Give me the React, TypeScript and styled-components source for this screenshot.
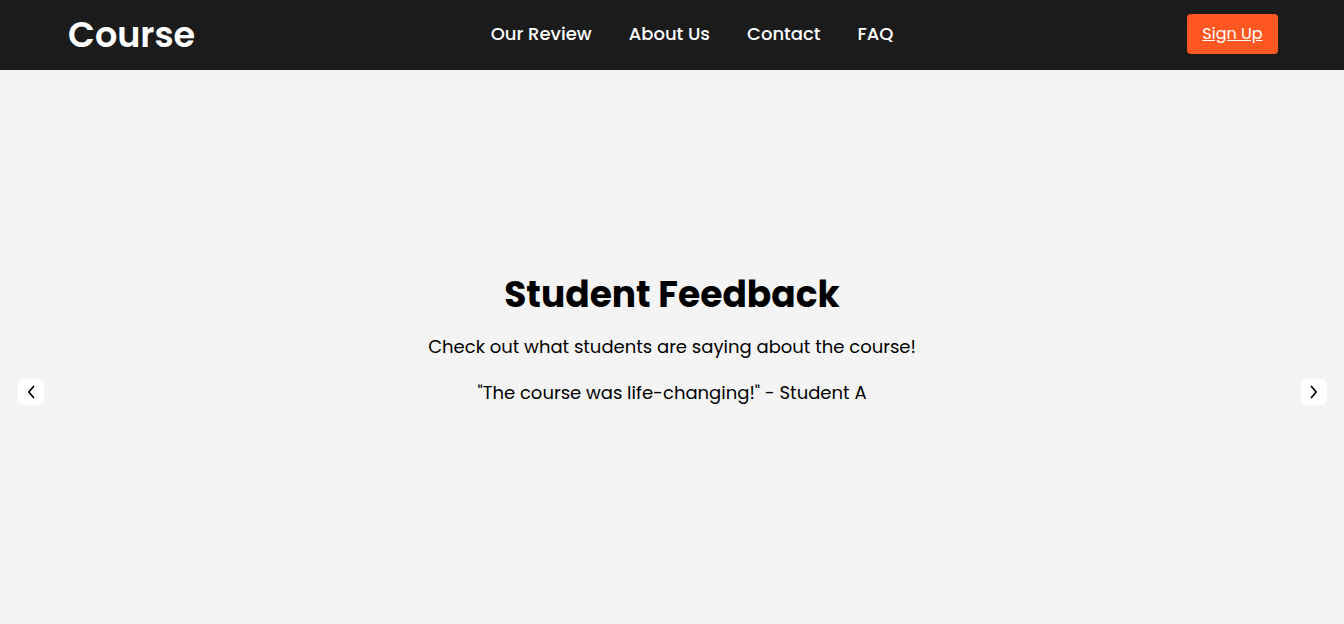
import React from "react";
import styled, { createGlobalStyle } from "styled-components";

const Global = createGlobalStyle`
  html, body { margin: 0; padding: 0; }
  body { background: #f4f4f4; font-family: "Poppins", "Noto Sans", sans-serif; color: #000; }
  #root { min-height: 624px; display: flex; flex-direction: column; }
`;

const Header = styled.header`
  height: 70px;
  background: #1b1b1b;
  display: flex;
  align-items: center;
  justify-content: space-between;
  padding: 0 66px 0 68px;
  box-sizing: border-box;
`;

const Logo = styled.div`
  font-weight: 600;
  font-size: 35px;
  line-height: 1;
  color: #fff;
  margin-bottom: 2px;
`;

const Nav = styled.nav`
  display: flex;
  gap: 37px;
  margin: 0 0 3px 2px;
`;

const NavLink = styled.a`
  color: #fff;
  text-decoration: none;
  font-size: 18px;
  font-weight: 500;
`;

const SignUp = styled.a`
  background: #ff5722;
  color: #fff;
  font-size: 16px;
  text-decoration: underline;
  width: 91px;
  height: 40px;
  border-radius: 4px;
  display: flex;
  align-items: center;
  justify-content: center;
  margin-bottom: 3px;
`;

const Main = styled.main`
  flex: 1;
  position: relative;
  display: flex;
  flex-direction: column;
  align-items: center;
  padding-top: 200px;
  box-sizing: border-box;
`;

const Title = styled.h1`
  margin: 0;
  font-size: 36px;
  font-weight: 700;
  line-height: 50px;
`;

const Subtitle = styled.p`
  margin: 13px 0 0;
  font-size: 18px;
  line-height: 28px;
`;

const Quote = styled.p`
  margin: 18px 0 0;
  font-size: 18px;
  line-height: 28px;
`;

const Arrow = styled.button<{ $side: "left" | "right" }>`
  position: absolute;
  top: 309px;
  ${(p) => (p.$side === "left" ? "left: 18px;" : "right: 17px;")}
  width: 26px;
  height: 26px;
  border: none;
  border-radius: 5px;
  background: #fff;
  color: #000;
  padding: 0;
  display: flex;
  align-items: center;
  justify-content: center;
`;

const Chevron = ({ dir }: { dir: "left" | "right" }) => (
  <svg width="8" height="14" viewBox="0 0 8 14" fill="none">
    <path
      d={dir === "left" ? "M6.5 1.5 L1.8 7 L6.5 12.5" : "M1.5 1.5 L6.2 7 L1.5 12.5"}
      stroke="#000"
      strokeWidth="1.7"
      strokeLinecap="round"
      strokeLinejoin="round"
    />
  </svg>
);

export default function App() {
  return (
    <>
      <Global />
      <Header>
        <Logo>Course</Logo>
        <Nav>
          <NavLink href="#">Our Review</NavLink>
          <NavLink href="#">About Us</NavLink>
          <NavLink href="#">Contact</NavLink>
          <NavLink href="#">FAQ</NavLink>
        </Nav>
        <SignUp href="#">Sign Up</SignUp>
      </Header>
      <Main>
        <Title>Student Feedback</Title>
        <Subtitle>Check out what students are saying about the course!</Subtitle>
        <Quote>"The course was life-changing!" - Student A</Quote>
        <Arrow $side="left">
          <Chevron dir="left" />
        </Arrow>
        <Arrow $side="right">
          <Chevron dir="right" />
        </Arrow>
      </Main>
    </>
  );
}
